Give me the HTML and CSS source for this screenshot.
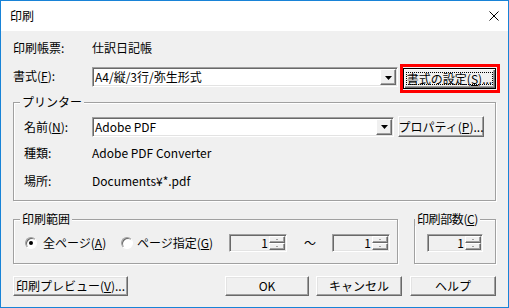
FILE: index.html
```html
<!DOCTYPE html>
<html lang="ja">
<head>
  <meta charset="UTF-8" />
  <title>印刷</title>
  <link rel="stylesheet" href="styles.css">
</head>
<body>
  <div class="window">
    <div class="titlebar">
      <span class="title">印刷</span>
      <svg class="close" width="10" height="10" viewBox="0 0 10 10">
        <path d="M0.5 0.5 L9.5 9.5 M9.5 0.5 L0.5 9.5" stroke="#000" stroke-width="1" fill="none"/>
      </svg>
    </div>

    <div class="dialog">
      <div class="row row-form">
        <span class="lbl">印刷帳票:</span>
        <span>仕訳日記帳</span>
      </div>

      <div class="row row-style">
        <span class="lbl lbl-style">書式(<u>F</u>):</span>
        <div class="combo combo-style">
          <span class="combo-text">A4/縦/3行/弥生形式</span>
          <span class="drop"><svg width="7" height="4" viewBox="0 0 7 4"><path d="M0 0 H7 L3.5 4 Z" fill="#000"/></svg></span>
        </div>
        <div class="mark">
          <button class="btn btn-default"><span class="focus">書式の設定(<u>S</u>)...</span></button>
        </div>
      </div>

      <fieldset class="group printer">
        <legend>プリンター</legend>
        <div class="p-row name-row">
          <span class="p-lbl">名前(<u>N</u>):</span>
          <div class="combo combo-printer">
            <span class="combo-text">Adobe PDF</span>
            <span class="drop"><svg width="7" height="4" viewBox="0 0 7 4"><path d="M0 0 H7 L3.5 4 Z" fill="#000"/></svg></span>
          </div>
          <button class="btn btn-props">プロパティ(<u>P</u>)...</button>
        </div>
        <div class="p-row info-row">
          <span class="p-lbl">種類:</span>
          <span>Adobe PDF Converter</span>
        </div>
        <div class="p-row info-row info-last">
          <span class="p-lbl">場所:</span>
          <span>Documents¥*.pdf</span>
        </div>
      </fieldset>

      <div class="lower">
        <fieldset class="group range">
          <legend>印刷範囲</legend>
          <div class="range-row">
            <span class="radio on"></span>
            <span class="radio-lbl radio-lbl-all">全ページ(<u>A</u>)</span>
            <span class="radio"></span>
            <span class="radio-lbl radio-lbl-pages">ページ指定(<u>G</u>)</span>
            <div class="spin">
              <span class="spin-val">1</span>
              <span class="spin-btns"><span class="up"></span><span class="down"></span></span>
            </div>
            <span class="tilde">～</span>
            <div class="spin">
              <span class="spin-val">1</span>
              <span class="spin-btns"><span class="up"></span><span class="down"></span></span>
            </div>
          </div>
        </fieldset>

        <fieldset class="group copies">
          <legend>印刷部数(<u>C</u>)</legend>
          <div class="copies-row">
            <div class="spin spin-copies">
              <span class="spin-val">1</span>
              <span class="spin-btns"><span class="up"></span><span class="down"></span></span>
            </div>
          </div>
        </fieldset>
      </div>

      <div class="buttons">
        <button class="btn btn-preview">印刷プレビュー(<u>V</u>)...</button>
        <span class="spacer"></span>
        <button class="btn btn-ok">OK</button>
        <button class="btn btn-cancel">キャンセル</button>
        <button class="btn btn-help">ヘルプ</button>
      </div>
    </div>
  </div>
</body>
</html>
```

FILE: styles.css
```css
* {
  box-sizing: border-box;
}
body {
  margin: 0;
  font-family: "MS UI Gothic", "Noto Sans CJK JP", "Noto Sans", sans-serif;
  font-size: 12px;
  line-height: 14px;
  color: #000;
  background: #fff;
}
u {
  text-underline-offset: 1px;
}
.window {
  width: 509px;
  height: 308px;
  border: 1px solid #1883d7;
  background: #f0f0f0;
  display: flex;
  flex-direction: column;
}
.titlebar {
  height: 30px;
  flex-shrink: 0;
  background: #fff;
  display: flex;
  align-items: center;
  padding: 0 9px;
}
.title {
  flex: 1;
}
.close {
  display: block;
}
.dialog {
  flex: 1;
  padding: 0 12px;
}
.row {
  display: flex;
}
.row-form {
  margin-top: 10px;
  height: 14px;
}
.lbl {
  width: 79px;
  flex-shrink: 0;
}
.row-style {
  margin-top: 9px;
  height: 29px;
}
.lbl-style {
  margin-top: 5px;
}

/* sunken combo box */
.combo {
  display: flex;
  height: 20px;
  flex-shrink: 0;
  border: 1px solid;
  border-color: #a0a0a0 #fff #fff #a0a0a0;
  box-shadow: inset 1px 1px #696969, inset -1px -1px #e3e3e3;
  background: #fff;
  padding: 1px;
}
.combo-style {
  width: 306px;
  margin-top: 3px;
}
.combo-printer {
  width: 302px;
}
.combo-text {
  flex: 1;
  padding-left: 1px;
  line-height: 16px;
  white-space: nowrap;
}
.drop {
  width: 16px;
  height: 16px;
  display: flex;
  align-items: center;
  justify-content: center;
  background: #f0f0f0;
  border: 1px solid;
  border-color: #fff #696969 #696969 #fff;
  box-shadow: inset -1px -1px #a0a0a0;
}
.drop svg {
  display: block;
  margin-top: 1px;
}

/* raised buttons */
.btn {
  font: inherit;
  color: #000;
  height: 20px;
  padding: 0;
  background: #f0f0f0;
  border: 1px solid;
  border-color: #fff #696969 #696969 #fff;
  box-shadow: inset -1px -1px #a0a0a0, inset 1px 1px #e3e3e3;
  display: flex;
  align-items: center;
  justify-content: center;
  white-space: nowrap;
  flex-shrink: 0;
}
.mark {
  width: 100px;
  height: 29px;
  margin-left: 2px;
  flex-shrink: 0;
  border: 3px solid #f00;
  display: flex;
  align-items: center;
}
.btn-default {
  width: 93px;
  height: 21px;
  border: 1px solid #000;
  box-shadow: inset 1px 1px #fff, inset -1px -1px #696969, inset -2px -2px #a0a0a0;
  padding: 3px;
}
.focus {
  flex: 1;
  align-self: stretch;
  border: 1px dotted #000;
  line-height: 11px;
  display: flex;
  align-items: center;
  justify-content: center;
}

/* group boxes */
.group {
  margin: 0;
  padding: 0;
  min-width: 0;
  border: 1px solid #a0a0a0;
  box-shadow: inset 1px 1px #fff, 1px 1px #fff;
}
.group legend {
  padding: 0 2px;
  margin-left: 6px;
  line-height: 14px;
  background: #f0f0f0;
}
.printer {
  margin-top: 2px;
  width: 483px;
  padding-bottom: 12px;
}
.p-row {
  display: flex;
  align-items: center;
  padding-left: 10px;
}
.p-lbl {
  width: 68px;
  flex-shrink: 0;
}
.name-row {
  margin-top: 7px;
  height: 21px;
}
.btn-props {
  width: 86px;
  height: 21px;
  margin-left: 4px;
}
.info-row {
  margin-top: 9px;
  height: 14px;
}
.info-last {
  margin-top: 14px;
}

.lower {
  display: flex;
  margin-top: 11px;
}
.range {
  width: 385px;
  padding-bottom: 11px;
}
.copies {
  width: 82px;
  margin-left: 16px;
  padding-bottom: 11px;
}
.copies legend {
  margin-left: 0;
  letter-spacing: -0.4px;
}
.range-row,
.copies-row {
  display: flex;
  align-items: center;
  height: 18px;
  margin-top: 8px;
}
.range-row {
  padding-left: 11px;
}
.copies-row {
  padding-left: 12px;
}

.radio {
  width: 12px;
  height: 12px;
  flex-shrink: 0;
  border-radius: 50%;
  border: 1px solid;
  border-color: #a0a0a0 #fff #fff #a0a0a0;
  box-shadow: inset 1px 1px #696969;
  background: #fff;
  display: flex;
  align-items: center;
  justify-content: center;
}
.radio.on::after {
  content: "";
  width: 4px;
  height: 4px;
  border-radius: 50%;
  background: #000;
}
.radio-lbl {
  white-space: nowrap;
  flex-shrink: 0;
}
.radio-lbl-all {
  width: 84px;
  padding-left: 6px;
}
.radio-lbl-pages {
  width: 96px;
  padding-left: 4px;
}

.spin {
  display: flex;
  width: 58px;
  height: 18px;
  flex-shrink: 0;
  border: 1px solid;
  border-color: #a0a0a0 #fff #fff #a0a0a0;
  box-shadow: inset 1px 1px #696969, inset -1px -1px #e3e3e3;
  padding: 1px;
  background: #f0f0f0;
}
.spin-copies {
  width: 56px;
}
.spin-val {
  flex: 1;
  text-align: right;
  padding-right: 1px;
  line-height: 14px;
}
.spin-btns {
  width: 16px;
  display: flex;
  flex-direction: column;
}
.spin-btns span {
  flex: 1;
  border: 1px solid;
  border-color: #fff #696969 #696969 #fff;
  box-shadow: inset -1px -1px #a0a0a0;
  display: flex;
  align-items: center;
  justify-content: center;
}
.spin-btns span::after {
  content: "";
  width: 2px;
  height: 1px;
  background: #a0a0a0;
}
.tilde {
  width: 44px;
  margin-left: 1px;
  text-align: center;
  flex-shrink: 0;
}

.buttons {
  display: flex;
  margin-top: 12px;
  height: 20px;
}
.spacer {
  flex: 1;
}
.btn-preview {
  width: 115px;
}
.btn-ok {
  width: 84px;
}
.btn-cancel {
  width: 86px;
  margin-left: 7px;
}
.btn-help {
  width: 86px;
  margin-left: 8px;
}
```
